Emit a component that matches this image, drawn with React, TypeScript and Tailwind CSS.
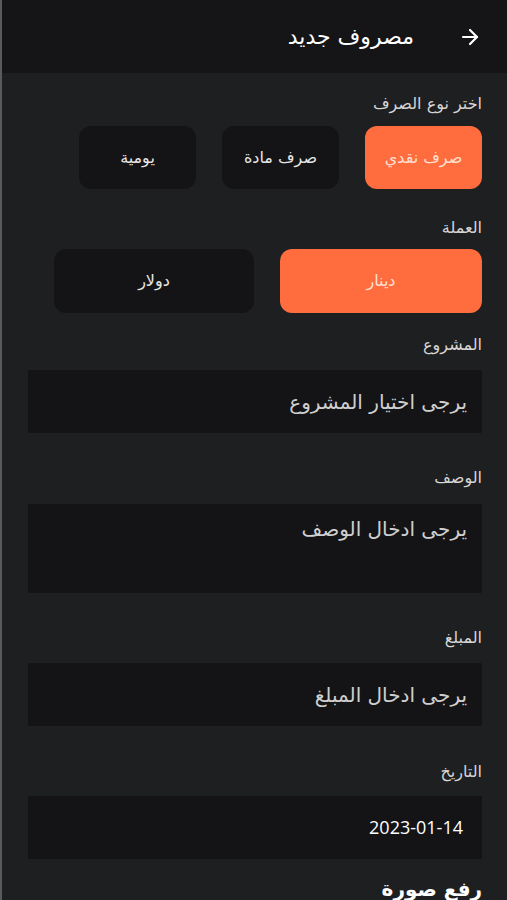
import { ArrowRight } from "lucide-react";

const arabic = { fontFamily: '"DejaVu Sans", "Noto Sans", sans-serif' };

function Label({ text, className }: { text: string; className: string }) {
    return (
        <div className={`text-[16px] leading-[20px] text-[#d6d6d6] ${className}`}>{text}</div>
    )
}

function Field({ text, className, tall }: { text: string; className: string; tall?: boolean }) {
    return (
        <div className={`w-full bg-[#141416] rounded-[2px] px-[15px] ${tall ? 'h-[89px] pt-[10px]' : 'h-[63px] flex items-center'} ${className}`}>
            <span className="text-[20px] text-[#cfcfcf]">{text}</span>
        </div>
    )
}

export default function App() {
    return (
        <div dir="rtl" style={arabic} className="w-[507px] h-[900px] overflow-hidden bg-[#1e1f21] border-l-2 border-[#5a5a5c] text-white">
            <header className="h-[73px] bg-[#151517] flex items-center gap-[44px] pr-[25px]">
                <ArrowRight size={24} strokeWidth={2.2} className="text-white" />
                <h1 className="text-[22px] font-medium text-white">مصروف جديد</h1>
            </header>

            <div className="pr-[25px] pl-[26px]">
                <Label text="اختر نوع الصرف" className="mt-[21px]" />
                <div className="flex gap-[26px] mt-[12px]">
                    <button className="w-[117px] h-[63px] rounded-[12px] bg-[#ff6d3f] text-[#ffe0d0] text-[16px]">صرف نقدي</button>
                    <button className="w-[117px] h-[63px] rounded-[12px] bg-[#141416] text-[#e6e6e6] text-[16px]">صرف مادة</button>
                    <button className="w-[117px] h-[63px] rounded-[12px] bg-[#141416] text-[#e6e6e6] text-[16px]">يومية</button>
                </div>

                <Label text="العملة" className="mt-[29px]" />
                <div className="flex gap-[26px] mt-[11px]">
                    <button className="w-[202px] h-[64px] rounded-[12px] bg-[#ff6d3f] text-[#ffe0d0] text-[16px]">دينار</button>
                    <button className="w-[200px] h-[64px] rounded-[12px] bg-[#141416] text-[#e6e6e6] text-[16px]">دولار</button>
                </div>

                <Label text="المشروع" className="mt-[22px]" />
                <Field text="يرجى اختيار المشروع" className="mt-[15px]" />

                <Label text="الوصف" className="mt-[35px]" />
                <Field text="يرجى ادخال الوصف" className="mt-[16px]" tall />

                <Label text="المبلغ" className="mt-[35px]" />
                <Field text="يرجى ادخال المبلغ" className="mt-[15px]" />

                <Label text="التاريخ" className="mt-[36px]" />
                <div className="w-full h-[63px] mt-[14px] bg-[#141416] flex items-center pr-[19px]">
                    <span dir="ltr" className="text-[18px] text-white" style={{ fontFamily: '"Open Sans", sans-serif' }}>2023-01-14</span>
                </div>

                <div className="mt-[18px] text-[20px] leading-[24px] font-bold text-white">رفع صورة</div>
            </div>
        </div>
    )
}
